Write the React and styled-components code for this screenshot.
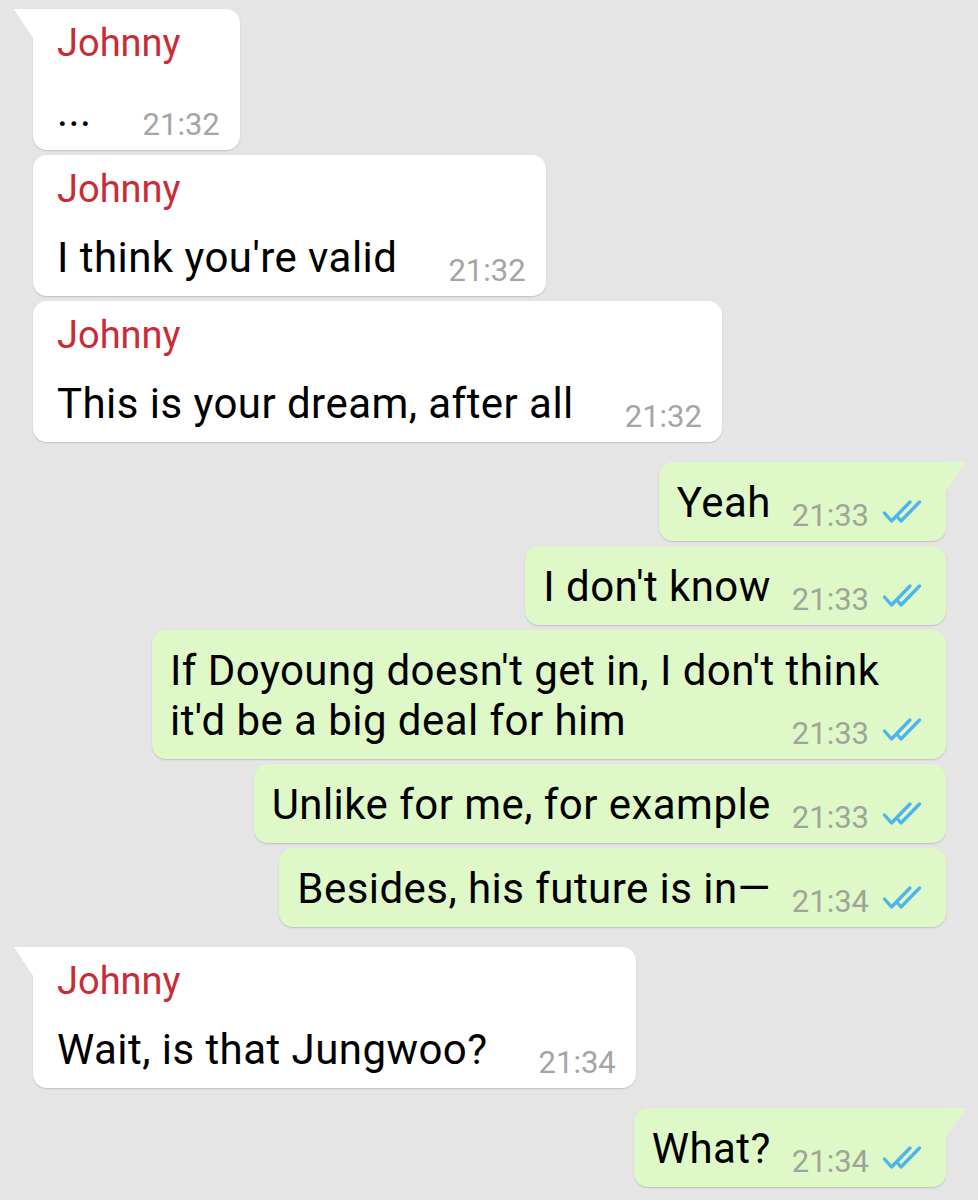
import React from 'react';
import styled, { createGlobalStyle, css } from 'styled-components';

const GlobalStyle = createGlobalStyle`
	body {
		margin: 0;
		background: #e5e5e5;
		font-family: Roboto, 'Liberation Sans', sans-serif;
		-webkit-font-smoothing: antialiased;
	}
`;

const Chat = styled.div`
	display: flex;
	flex-direction: column;
	padding: 9px 0 12px;
	min-height: 1200px;
	box-sizing: border-box;
`;

const Bubble = styled.div`
	position: relative;
	display: flex;
	flex-direction: column;
	box-sizing: border-box;
	max-width: 794px;
	width: ${(p) => (p.$wide ? '794px' : 'auto')};
	align-self: ${(p) => (p.$out ? 'flex-end' : 'flex-start')};
	margin: ${(p) => (p.$first ? '20px' : '5px')} 32px 0 33px;
	padding: ${(p) => (p.$out ? '16px 24px 13px 18px' : '16px 20px 13px 24px')};
	background: ${(p) => (p.$out ? '#dff8c8' : '#ffffff')};
	border-radius: 14px;
	box-shadow: 0 1px 1.5px rgba(0, 0, 0, 0.16);

	&:first-child {
		margin-top: 0;
	}

	${(p) =>
		p.$tail &&
		(p.$out
			? css`
					border-top-right-radius: 0;
					&::before {
						content: '';
						position: absolute;
						top: 0;
						right: -20px;
						border-top: 29px solid #dff8c8;
						border-right: 20px solid transparent;
					}
			  `
			: css`
					border-top-left-radius: 0;
					&::before {
						content: '';
						position: absolute;
						top: 0;
						left: -19px;
						border-top: 29px solid #ffffff;
						border-left: 19px solid transparent;
					}
			  `)}
`;

const Name = styled.div`
	color: #cb2b35;
	font-size: 38px;
	line-height: 36px;
	margin-bottom: 26px;
`;

const Line = styled.div`
	display: flex;
	align-items: flex-end;
	height: 50px;
`;

const Text = styled.span`
	color: #000;
	font-size: 42px;
	letter-spacing: 0.45px;
	line-height: 50px;
	white-space: nowrap;
`;

const Meta = styled.span`
	display: flex;
	align-items: flex-end;
	margin-left: auto;
	padding-left: ${(p) => (p.$out ? '21px' : '51px')};
	color: ${(p) => (p.$out ? '#9ea699' : '#a5a5a5')};
	font-size: 31px;
	line-height: 25px;
	white-space: nowrap;
`;

const TickIcon = styled.svg`
	width: 40px;
	height: 25px;
	margin: 0 0 4px 13px;
`;

function Ticks() {
	return (
		<TickIcon viewBox='0 0 40 25' fill='none' stroke='#4db5ea' strokeWidth='3.4' strokeLinecap='round' strokeLinejoin='round'>
			<path d='M2.5 14 L9.5 22 L28 3' />
			<path d='M16 18.5 L19 22 L37.5 3' />
		</TickIcon>
	);
}

const messages = [
	{ from: 'Johnny', lines: ['...'], time: '21:32', tail: true },
	{ from: 'Johnny', lines: ["I think you're valid"], time: '21:32' },
	{ from: 'Johnny', lines: ['This is your dream, after all'], time: '21:32' },
	{ out: true, lines: ['Yeah'], time: '21:33', tail: true },
	{ out: true, lines: ["I don't know"], time: '21:33' },
	{
		out: true,
		wide: true,
		lines: ["If Doyoung doesn't get in, I don't think", "it'd be a big deal for him"],
		time: '21:33',
	},
	{ out: true, lines: ['Unlike for me, for example'], time: '21:33' },
	{ out: true, lines: ['Besides, his future is in\u2014'], time: '21:34' },
	{ from: 'Johnny', lines: ['Wait, is that Jungwoo?'], time: '21:34', tail: true },
	{ out: true, lines: ['What?'], time: '21:34', tail: true },
];

function Message({ m }) {
	let last = m.lines.length - 1;
	return (
		<Bubble $out={m.out} $tail={m.tail} $first={m.tail} $wide={m.wide}>
			{m.from && <Name>{m.from}</Name>}
			{m.lines.map((t, i) => (
				<Line key={i}>
					<Text>{t}</Text>
					{i === last && (
						<Meta $out={m.out}>
							{m.time}
							{m.out && <Ticks />}
						</Meta>
					)}
				</Line>
			))}
		</Bubble>
	);
}

export default function App() {
	return (
		<>
			<GlobalStyle />
			<Chat>
				{messages.map((m, i) => (
					<Message key={i} m={m} />
				))}
			</Chat>
		</>
	);
}
